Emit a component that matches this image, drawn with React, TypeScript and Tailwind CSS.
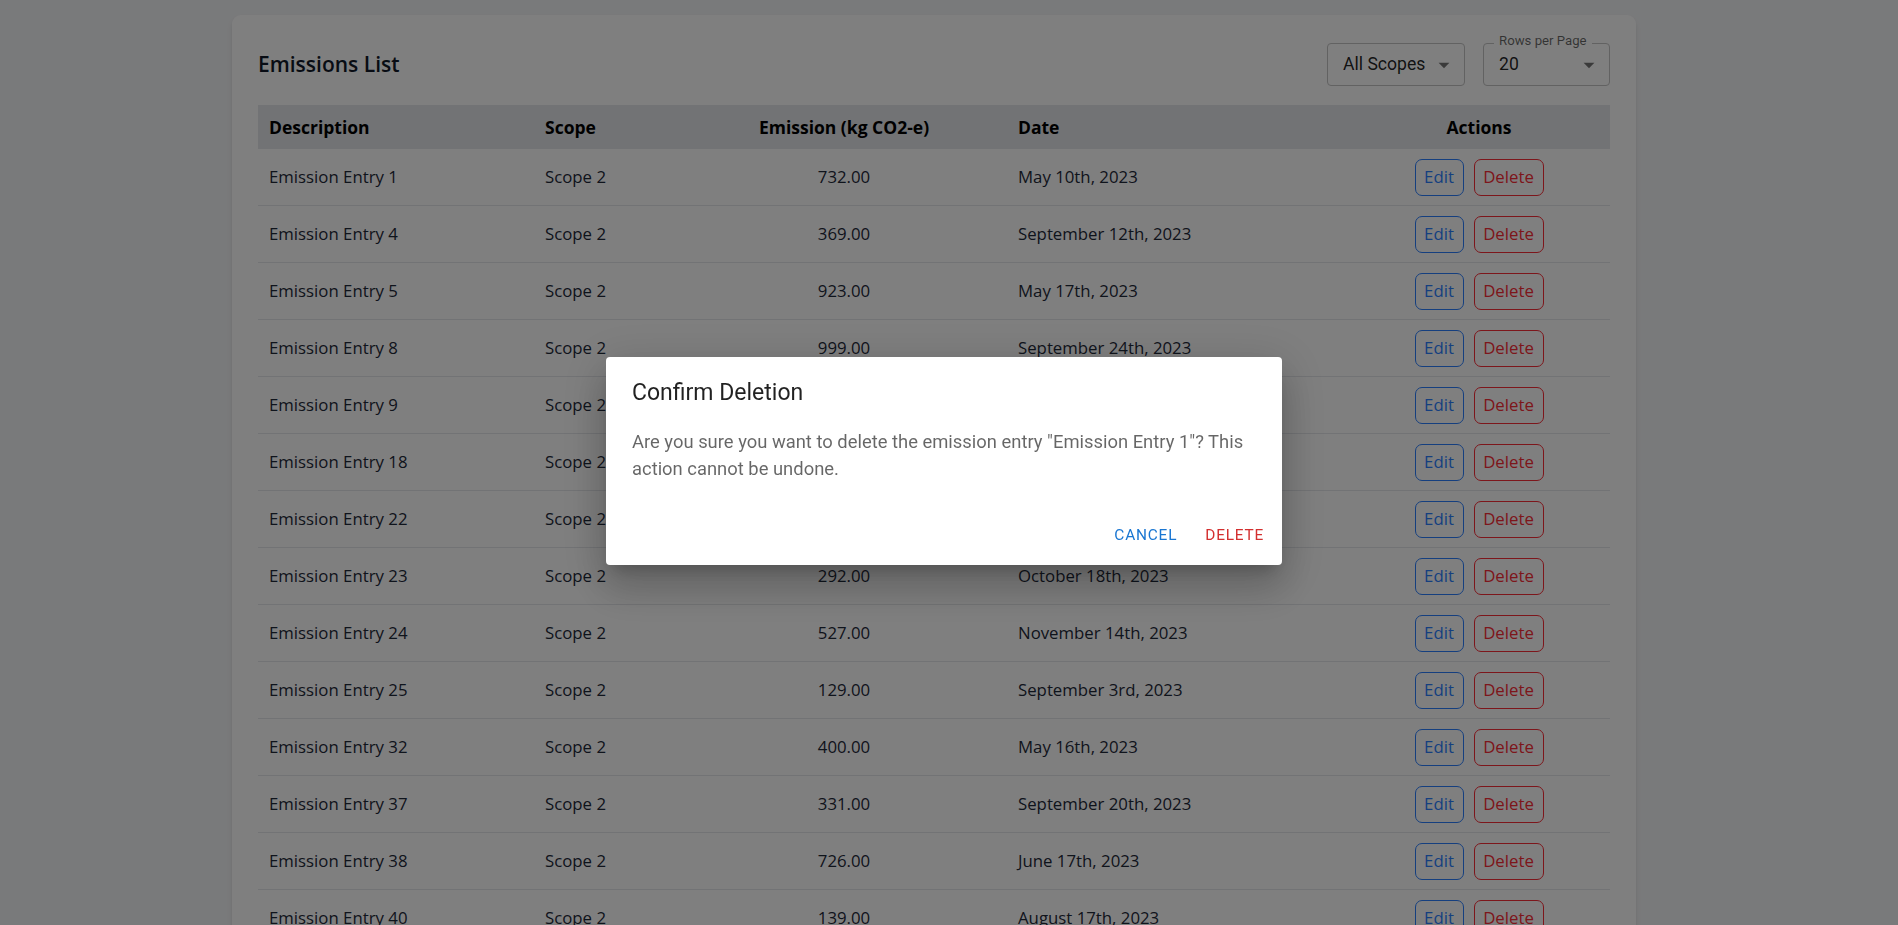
import { clsx } from 'clsx';

interface Emission {
  id: number;
  scope: string;
  amount: string;
  date: string;
}

const emissions: Emission[] = [
  { id: 1, scope: 'Scope 2', amount: '732.00', date: 'May 10th, 2023' },
  { id: 4, scope: 'Scope 2', amount: '369.00', date: 'September 12th, 2023' },
  { id: 5, scope: 'Scope 2', amount: '923.00', date: 'May 17th, 2023' },
  { id: 8, scope: 'Scope 2', amount: '999.00', date: 'September 24th, 2023' },
  { id: 9, scope: 'Scope 2', amount: '458.00', date: 'July 2nd, 2023' },
  { id: 18, scope: 'Scope 2', amount: '611.00', date: 'June 5th, 2023' },
  { id: 22, scope: 'Scope 2', amount: '845.00', date: 'August 9th, 2023' },
  { id: 23, scope: 'Scope 2', amount: '292.00', date: 'October 18th, 2023' },
  { id: 24, scope: 'Scope 2', amount: '527.00', date: 'November 14th, 2023' },
  { id: 25, scope: 'Scope 2', amount: '129.00', date: 'September 3rd, 2023' },
  { id: 32, scope: 'Scope 2', amount: '400.00', date: 'May 16th, 2023' },
  { id: 37, scope: 'Scope 2', amount: '331.00', date: 'September 20th, 2023' },
  { id: 38, scope: 'Scope 2', amount: '726.00', date: 'June 17th, 2023' },
  { id: 40, scope: 'Scope 2', amount: '139.00', date: 'August 17th, 2023' },
  { id: 41, scope: 'Scope 2', amount: '584.00', date: 'July 21st, 2023' },
  { id: 44, scope: 'Scope 2', amount: '217.00', date: 'October 2nd, 2023' },
  { id: 47, scope: 'Scope 2', amount: '903.00', date: 'December 1st, 2023' },
  { id: 50, scope: 'Scope 2', amount: '376.00', date: 'June 28th, 2023' },
  { id: 53, scope: 'Scope 2', amount: '648.00', date: 'April 11th, 2023' },
  { id: 55, scope: 'Scope 2', amount: '812.00', date: 'March 30th, 2023' },
];

const cols = 'grid grid-cols-[276px_147px_326px_342px_260px]';

function OutlinedSelect({ label, value, className }: { label?: string; value: string; className: string }) {
  return (
    <div className={clsx('relative h-[43px] rounded-[4px] border border-[#c4c4c4] font-["Roboto",sans-serif]', className)}>
      {label && (
        <span className="absolute left-[10px] top-[-13px] bg-white px-[5px] text-[13.2px] leading-[19px] text-[rgba(0,0,0,0.6)]">
          {label}
        </span>
      )}
      <div className="flex h-full items-center pl-[15px] text-[17.6px] text-[rgba(0,0,0,0.87)]">{value}</div>
      <svg className="absolute right-[7px] top-[8px] h-[26px] w-[26px]" viewBox="0 0 24 24">
        <path d="M7 10l5 5 5-5z" fill="rgba(0,0,0,0.54)" />
      </svg>
    </div>
  );
}

export default function App() {
  return (
    <div className="h-screen overflow-hidden bg-gray-100 font-['Open_Sans',sans-serif]">
      <div className="pl-[232px] pt-[15px]">
        <div className="w-[1404px] rounded-[9px] bg-white px-[26px] pt-[28px] pb-[26px] shadow-md">
          <div className="mb-[19px] flex h-[43px] items-center justify-between">
            <h2 className="text-[21px] font-semibold text-gray-900">Emissions List</h2>
            <div className="flex gap-[18px]">
              <OutlinedSelect value="All Scopes" className="w-[138px]" />
              <OutlinedSelect label="Rows per Page" value="20" className="w-[127px]" />
            </div>
          </div>

          <div>
            <div className={clsx(cols, 'h-[44px] items-center bg-gray-200 text-[17.5px] font-bold text-black')}>
              <div className="pl-[11px]">Description</div>
              <div className="pl-[11px]">Scope</div>
              <div className="text-center">Emission (kg CO2-e)</div>
              <div className="pl-[11px]">Date</div>
              <div className="text-center">Actions</div>
            </div>
            {emissions.map((e) => (
              <div key={e.id} className={clsx(cols, 'h-[57px] items-center border-b border-gray-200 text-[16.8px] text-gray-800')}>
                <div className="pl-[11px]">Emission Entry {e.id}</div>
                <div className="pl-[11px]">{e.scope}</div>
                <div className="text-center">{e.amount}</div>
                <div className="pl-[11px]">{e.date}</div>
                <div className="flex justify-center gap-[10px]">
                  <button className="h-[37px] w-[49px] rounded-[7px] border border-blue-500 text-blue-500">Edit</button>
                  <button className="h-[37px] w-[70px] rounded-[7px] border border-red-500 text-red-500">Delete</button>
                </div>
              </div>
            ))}
          </div>
        </div>
      </div>

      <div className="fixed inset-0 flex items-center justify-center bg-black/50 pr-[10px] pb-[3px] font-['Roboto',sans-serif]">
        <div className="w-[676px] rounded-[4px] bg-white shadow-[0px_11px_15px_-7px_rgba(0,0,0,0.2),0px_24px_38px_3px_rgba(0,0,0,0.14),0px_9px_46px_8px_rgba(0,0,0,0.12)]">
          <h2 className="px-[26px] pt-[18px] pb-[18px] text-[23px] leading-[35px] font-normal text-[rgba(0,0,0,0.87)]">
            Confirm Deletion
          </h2>
          <div className="px-[26px] pt-[1px] pb-[25px]">
            <p className="text-[18.4px] leading-[26.5px] text-[rgba(0,0,0,0.6)]">
              Are you sure you want to delete the emission entry "Emission Entry 1"? This action cannot be undone.
            </p>
          </div>
          <div className="flex justify-end gap-[10px] p-[9px]">
            <button className="h-[40px] min-w-[70px] px-[9px] text-[15.4px] font-normal uppercase tracking-[0.8px] text-[#1976d2]">
              Cancel
            </button>
            <button className="h-[40px] min-w-[70px] px-[9px] text-[15.4px] font-normal uppercase tracking-[0.8px] text-[#d32f2f]">
              Delete
            </button>
          </div>
        </div>
      </div>
    </div>
  );
}
